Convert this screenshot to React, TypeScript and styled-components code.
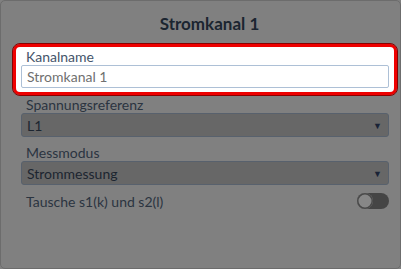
import React, {useState} from 'react';
import styled, {createGlobalStyle} from 'styled-components';

const GlobalStyle = createGlobalStyle`
  html, body {
    margin: 0;
    padding: 0;
    background: #808080;
  }
  * { box-sizing: border-box; }
`

const Dialog = styled.div`
  width: 401px;
  height: 269px;
  background: #808080;
  border: 1px solid #6c6c6c;
  border-radius: 5px;
  font-family: Lato, "Open Sans", sans-serif;
  padding: 0 3px 0 12px;
  display: flex;
  flex-direction: column;
`

const Title = styled.h2`
  margin: 0;
  padding: 12px 0 0 9px;
  height: 43px;
  text-align: center;
  font-size: 17px;
  font-weight: 700;
  color: #1b2530;
`

const Field = styled.div<{ $highlight?: boolean }>`
  display: flex;
  flex-direction: column;
  padding: ${p => p.$highlight ? '2px 5px 4px' : '0 8px'};
  margin-bottom: ${p => p.$highlight ? '2px' : '8px'};
  background: ${p => p.$highlight ? '#fff' : 'transparent'};
  border: ${p => p.$highlight ? '3px solid #ee0000' : 'none'};
  outline: ${p => p.$highlight ? '1px solid #8a0000' : 'none'};
  border-radius: 7px;
  > label {
    font-size: 14px;
    line-height: 16px;
    padding-left: 5px;
    color: ${p => p.$highlight ? '#44546a' : '#2b3440'};
  }
`

const TextInput = styled.input`
  height: 23px;
  width: 100%;
  border: 1px solid #adc0d6;
  border-radius: 2px;
  padding: 0 5px;
  font-family: inherit;
  font-size: 14px;
  color: #707070;
  background: #fff;
  outline: none;
`

const Select = styled.div`
  display: flex;
  align-items: center;
  justify-content: space-between;
  height: 24px;
  padding: 0 6px 0 5px;
  background: #676767;
  border: 1px solid #58616d;
  border-radius: 3px;
  font-size: 14px;
  color: #1c2530;
  > .arrow {
    font-size: 9px;
    color: #1a2336;
  }
`

const ToggleRow = styled.div`
  display: flex;
  align-items: center;
  justify-content: space-between;
  padding: 0 8px 0 13px;
  height: 16px;
  font-size: 14px;
  color: #2b3440;
`

const Switch = styled.button<{ $on: boolean }>`
  position: relative;
  width: 32px;
  height: 16px;
  border: none;
  border-radius: 8px;
  padding: 0;
  background: #454545;
  cursor: pointer;
  &::after {
    content: '';
    position: absolute;
    top: 0;
    left: ${p => p.$on ? '16px' : '0'};
    width: 16px;
    height: 16px;
    border-radius: 50%;
    background: #878787;
    box-shadow: inset 0 0 0 1.5px #4a4a4a;
  }
`

function App() {
  const [name, setName] = useState('Stromkanal 1')
  const [swap, setSwap] = useState(false)

  return (
    <>
      <GlobalStyle/>
      <Dialog>
        <Title>Stromkanal 1</Title>
        <Field $highlight>
          <label>Kanalname</label>
          <TextInput value={name} onChange={e => setName(e.target.value)}/>
        </Field>
        <Field>
          <label>Spannungsreferenz</label>
          <Select>L1<span className="arrow">▼</span></Select>
        </Field>
        <Field>
          <label>Messmodus</label>
          <Select>Strommessung<span className="arrow">▼</span></Select>
        </Field>
        <ToggleRow>
          Tausche s1(k) und s2(l)
          <Switch $on={swap} onClick={() => setSwap(!swap)}/>
        </ToggleRow>
      </Dialog>
    </>
  );
}

export default App
